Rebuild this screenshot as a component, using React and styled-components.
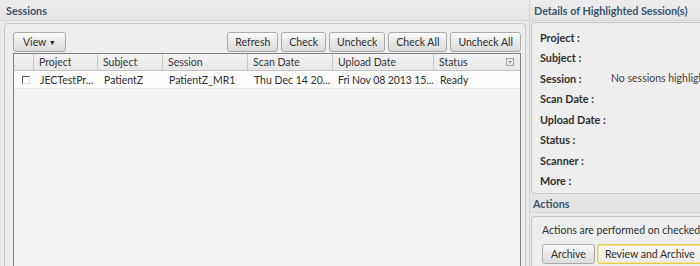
// Import: Dependencies
import React from "react";
import styled, { createGlobalStyle } from "styled-components";

const columns = [
  { key: "check", label: "", width: 20 },
  { key: "project", label: "Project", width: 64 },
  { key: "subject", label: "Subject", width: 65 },
  { key: "session", label: "Session", width: 85 },
  { key: "scan", label: "Scan Date", width: 85 },
  { key: "upload", label: "Upload Date", width: 101 },
  { key: "status", label: "Status", width: 85 },
];

const rows = [
  {
    project: "JECTestPr...",
    subject: "PatientZ",
    session: "PatientZ_MR1",
    scan: "Thu Dec 14 20...",
    upload: "Fri Nov 08 2013 15...",
    status: "Ready",
  },
];

const details = [
  ["Project :", ""],
  ["Subject :", ""],
  ["Session :", "No sessions highlighted"],
  ["Scan Date :", ""],
  ["Upload Date :", ""],
  ["Status :", ""],
  ["Scanner :", ""],
  ["More :", ""],
];

const gridTemplate = columns.map((c) => `${c.width}px`).join(" ");

// UI: App
function App() {
  return (
    <>
      <GlobalStyle />
      <Layout>
        <LeftPane>
          <PaneHeader>Sessions</PaneHeader>
          <SessionsBox>
            <Toolbar>
              <Button $pad={9}>
                View <Caret>▼</Caret>
              </Button>
              <Spacer />
              <Button>Refresh</Button>
              <Button>Check</Button>
              <Button>Uncheck</Button>
              <Button>Check All</Button>
              <Button>Uncheck All</Button>
            </Toolbar>

            <Table>
              <HeaderRow>
                {columns.map((c) => (
                  <HeaderCell key={c.key}>
                    {c.label}
                    {c.key === "status" && (
                      <MenuIcon width="8" height="8" viewBox="0 0 8 8">
                        <rect x="0.5" y="0.5" width="7" height="7" fill="none" stroke="#a0a0a0" />
                        <path d="M2 3 L6 3 L4 5.5 Z" fill="#8a8a8a" />
                      </MenuIcon>
                    )}
                  </HeaderCell>
                ))}
              </HeaderRow>
              {rows.map((r, i) => (
                <DataRow key={i}>
                  <DataCell>
                    <CheckBox />
                  </DataCell>
                  <DataCell>{r.project}</DataCell>
                  <DataCell>{r.subject}</DataCell>
                  <DataCell>{r.session}</DataCell>
                  <DataCell>{r.scan}</DataCell>
                  <DataCell $tight>{r.upload}</DataCell>
                  <DataCell>{r.status}</DataCell>
                </DataRow>
              ))}
            </Table>
          </SessionsBox>
        </LeftPane>

        <RightPane>
          <PaneHeader $indent={4}>Details of Highlighted Session(s)</PaneHeader>
          <DetailsBox>
            {details.map(([label, value]) => (
              <DetailRow key={label}>
                <DetailLabel>{label}</DetailLabel>
                <DetailValue>{value}</DetailValue>
              </DetailRow>
            ))}
          </DetailsBox>

          <ActionsHeader>Actions</ActionsHeader>
          <ActionsBox>
            <ActionsText>Actions are performed on checked sessions.</ActionsText>
            <ActionButtons>
              <Button $pad={8}>Archive</Button>
              <Button $pad={7} $focused>
                Review and Archive
              </Button>
            </ActionButtons>
          </ActionsBox>
        </RightPane>
      </Layout>
    </>
  );
}

// Export: App
export default App;

// Styled: GlobalStyle
const GlobalStyle = createGlobalStyle`
  html, body {
    margin: 0;
    padding: 0;
    overflow: hidden;
    background: #e9e9e9;
  }

  body {
    font-family: Lato, "Open Sans", sans-serif;
    font-size: 10.5px;
    color: #2e2e2e;
  }
`;

// Styled: Layout
const Layout = styled.div`
  display: grid;
  grid-template-columns: 529px 260px;
  height: 266px;
  width: 700px;
  overflow: hidden;
`;

// Styled: LeftPane
const LeftPane = styled.div`
  display: flex;
  flex-direction: column;
  min-height: 0;
`;

// Styled: RightPane
const RightPane = styled.div`
  display: flex;
  flex-direction: column;
  border-left: 1px solid #d2d2d2;
  min-height: 0;
`;

// Styled: PaneHeader
const PaneHeader = styled.div`
  height: 21px;
  line-height: 21px;
  padding-left: ${(p) => p.$indent ?? 6}px;
  box-sizing: border-box;
  border-bottom: 1px solid #d4d4d4;
  background: linear-gradient(#ececec, #e4e4e4);
  color: #3a5570;
  font-weight: 700;
  font-size: 10.8px;
  white-space: nowrap;
`;

// Styled: SessionsBox
const SessionsBox = styled.div`
  flex: 1;
  display: flex;
  flex-direction: column;
  margin: 2px 3px -12px 4px;
  padding: 8px 4px 0 8px;
  border: 1px solid #c6c6c6;
  border-radius: 4px;
  background: #eeeeee;
  min-height: 0;
`;

// Styled: Toolbar
const Toolbar = styled.div`
  display: flex;
  align-items: center;
  gap: 3px;
  height: 20px;
`;

// Styled: Spacer
const Spacer = styled.div`
  flex: 1;
`;

// Styled: Caret
const Caret = styled.span`
  font-size: 7px;
  vertical-align: 1px;
  color: #222222;
`;

// Styled: Button
const Button = styled.button`
  height: 20px;
  padding: 0 ${(p) => p.$pad ?? 7}px;
  font-family: inherit;
  font-size: 10.5px;
  color: #2e2e2e;
  white-space: nowrap;
  border: 1px solid ${(p) => (p.$focused ? "#e2cf4c" : "#a9a9a9")};
  box-shadow: ${(p) =>
    p.$focused ? "inset 0 0 0 1px #f3e78e" : "inset 0 1px 0 #ffffff"};
  border-radius: 3px;
  background: ${(p) =>
    p.$focused
      ? "linear-gradient(#fbfbf7, #ebebe4)"
      : "linear-gradient(#fbfbfb, #e8e8e8 50%, #dcdcdc)"};
`;

// Styled: Table
const Table = styled.div`
  flex: 1;
  margin-top: 1px;
  border: 1px solid #808080;
  border-bottom: none;
  background: #f3f3f3;
`;

// Styled: HeaderRow
const HeaderRow = styled.div`
  display: grid;
  grid-template-columns: ${gridTemplate};
  height: 16px;
  background: linear-gradient(#f3f3f3, #e6e6e6);
  border-bottom: 1px solid #c4c4c4;
`;

// Styled: HeaderCell
const HeaderCell = styled.div`
  position: relative;
  padding-left: 5px;
  line-height: 16px;
  border-right: 1px solid #c8c8c8;
  color: #363636;
  overflow: hidden;
  white-space: nowrap;

  &:last-child {
    border-right: none;
  }
`;

// Styled: MenuIcon
const MenuIcon = styled.svg`
  position: absolute;
  right: 5px;
  top: 4px;
`;

// Styled: DataRow
const DataRow = styled.div`
  display: grid;
  grid-template-columns: ${gridTemplate};
  height: 17px;
  background: #fcfcfc;
  border-bottom: 1px solid #e6e6e6;
`;

// Styled: DataCell
const DataCell = styled.div`
  display: flex;
  align-items: center;
  padding-left: ${(p) => (p.$tight ? 5 : 6)}px;
  letter-spacing: ${(p) => (p.$tight ? "-0.1px" : "normal")};
  white-space: nowrap;
  overflow: hidden;
  color: #2e2e2e;
`;

// Styled: CheckBox
const CheckBox = styled.span`
  display: block;
  width: 6px;
  height: 6px;
  margin-left: 2px;
  border-top: 1px solid #5a5a5a;
  border-left: 1px solid #5a5a5a;
  border-right: 1px solid #dcdcdc;
  border-bottom: 1px solid #dcdcdc;
  background: #ffffff;
`;

// Styled: DetailsBox
const DetailsBox = styled.div`
  margin: 1px 0 0 1px;
  padding: 4px 0 2px 8px;
  border: 1px solid #c6c6c6;
  border-right: none;
  border-radius: 4px 0 0 4px;
  background: #eeeeee;
`;

// Styled: DetailRow
const DetailRow = styled.div`
  display: grid;
  grid-template-columns: 71px 1fr;
  height: 20.5px;
  align-items: center;
  white-space: nowrap;
`;

// Styled: DetailLabel
const DetailLabel = styled.div`
  font-weight: 700;
  font-size: 10.8px;
  color: #2e2e2e;
`;

// Styled: DetailValue
const DetailValue = styled.div`
  color: #464040;
  overflow: hidden;
`;

// Styled: ActionsHeader
const ActionsHeader = styled.div`
  margin-top: 1px;
  height: 17px;
  line-height: 17px;
  padding-left: 3px;
  border-bottom: 1px solid #d4d4d4;
  background: #e4e4e4;
  color: #3a5570;
  font-weight: 700;
  font-size: 10.8px;
  white-space: nowrap;
`;

// Styled: ActionsBox
const ActionsBox = styled.div`
  flex: 1;
  margin: 3px 0 -12px 1px;
  padding: 4px 0 0 10px;
  border: 1px solid #c6c6c6;
  border-right: none;
  border-radius: 4px 0 0 0;
  background: #eeeeee;
`;

// Styled: ActionsText
const ActionsText = styled.div`
  white-space: nowrap;
  line-height: 18px;
  color: #2e2e2e;
`;

// Styled: ActionButtons
const ActionButtons = styled.div`
  display: flex;
  gap: 2px;
  margin-top: 5px;
`;
